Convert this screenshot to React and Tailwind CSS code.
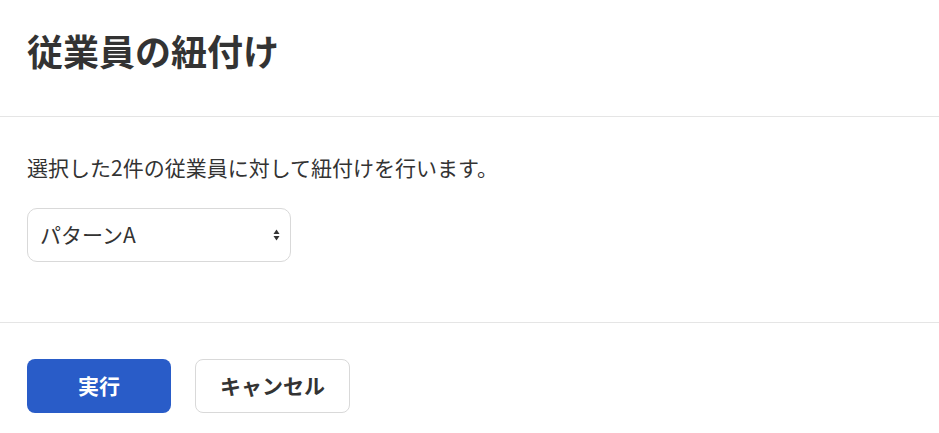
const font = { fontFamily: '"Noto Sans CJK JP", "Liberation Sans", sans-serif' };

export default function App() {
  return (
    <div className="w-[939px] h-[433px] bg-white text-[#333]" style={font}>
      {/* header */}
      <div className="h-[117px] px-[27px] flex items-center border-b border-[#e5e5e5]">
        <h1 className="text-[36px] font-bold leading-none pb-[16px]">従業員の紐付け</h1>
      </div>

      {/* body */}
      <div className="px-[27px] pt-[35px] pb-[60px] border-b border-[#e5e5e5]">
        <p className="text-[21px] leading-[30px]">選択した2件の従業員に対して紐付けを行います。</p>
        <div className="mt-[26px] w-[264px] h-[54px] border border-[#d9d9d9] rounded-[10px] flex items-center justify-between pl-[12px] pr-[10px]">
          <span className="text-[21px]">パターンA</span>
          <svg width="7" height="12" viewBox="0 0 7 12" className="text-[#333]">
            <path d="M3.5 0.5 L6.5 5 L0.5 5 Z" fill="currentColor" />
            <path d="M3.5 11.5 L6.5 7 L0.5 7 Z" fill="currentColor" />
          </svg>
        </div>
      </div>

      {/* footer */}
      <div className="px-[27px] pt-[36px] flex gap-[24px]">
        <button className="w-[144px] h-[54px] rounded-[8px] bg-[#295cc8] text-white text-[21px] font-bold">
          実行
        </button>
        <button className="w-[155px] h-[54px] rounded-[8px] border border-[#d9d9d9] bg-white text-[#333] text-[21px] font-bold">
          キャンセル
        </button>
      </div>
    </div>
  );
}
